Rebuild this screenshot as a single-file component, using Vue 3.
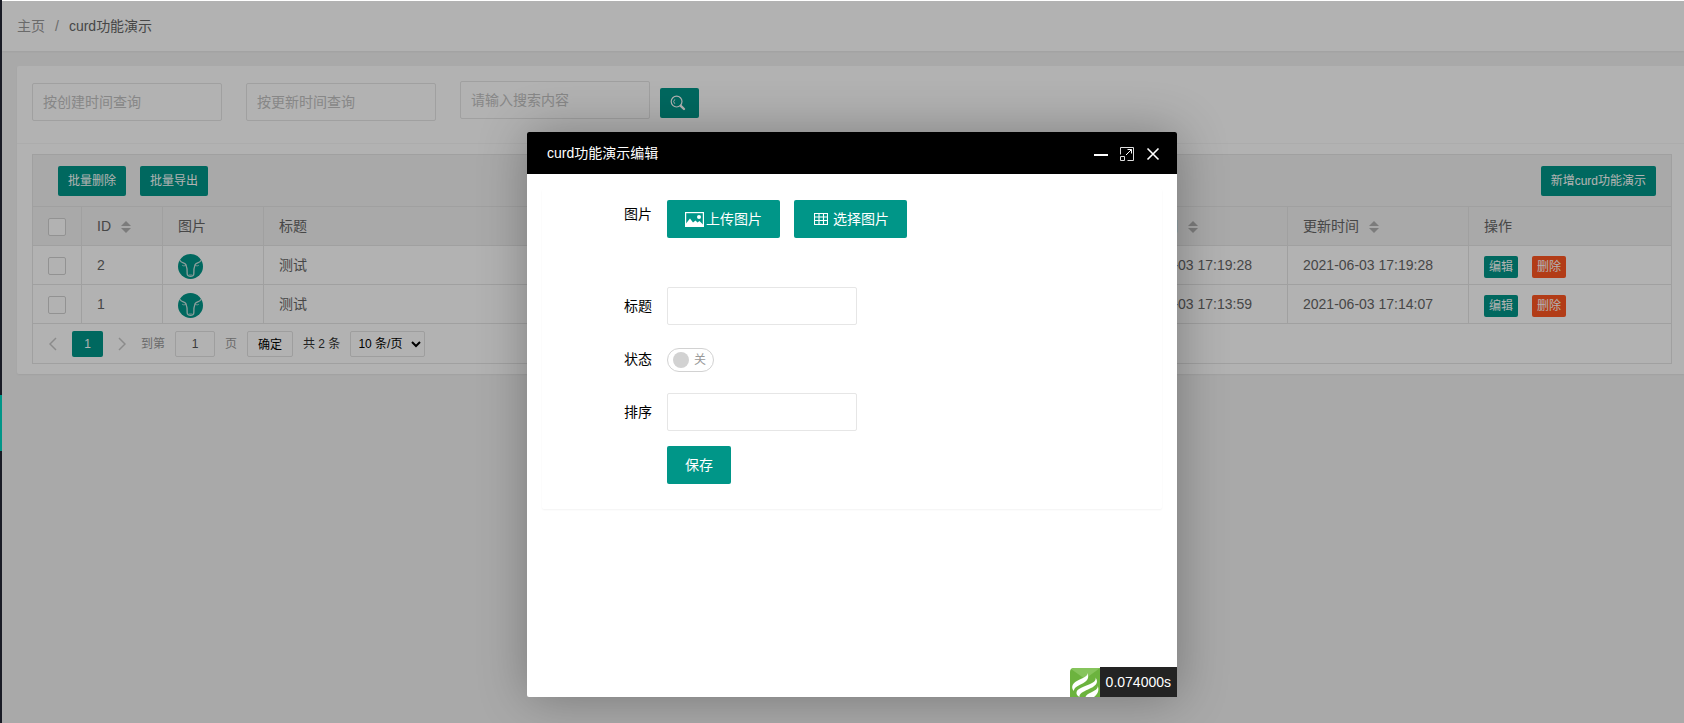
<script setup>
import { ref } from 'vue'

const rows = [
  { id: 2, title: '测试', created: '2021-06-03 17:19:28', updated: '2021-06-03 17:19:28' },
  { id: 1, title: '测试', created: '2021-06-03 17:13:59', updated: '2021-06-03 17:14:07' },
]
const page = ref('1')
const title = ref('')
const sort = ref('')
const enabled = ref(false)
</script>

<template>
  <div class="app">
    <aside class="side"><span class="side-active"></span></aside>
    <div class="main">
      <nav class="crumbs" aria-label="breadcrumb">
        <a href="#">主页</a><span class="slash">/</span><span class="current">curd功能演示</span>
      </nav>

      <section class="card">
        <form class="search" @submit.prevent>
          <input class="field" type="text" placeholder="按创建时间查询" aria-label="按创建时间查询" />
          <input class="field" type="text" placeholder="按更新时间查询" aria-label="按更新时间查询" />
          <div class="search-group">
            <input class="field" type="text" placeholder="请输入搜索内容" aria-label="请输入搜索内容" />
            <button class="btn small search-btn" type="submit" aria-label="搜索">
              <svg width="16" height="16" viewBox="0 0 16 16" fill="none" stroke="currentColor">
                <circle cx="6.6" cy="6.6" r="5.4" stroke-width="1.2" />
                <path d="M4.8 8.8A3 3 0 0 1 4.8 4.4" stroke-width=".9" />
                <path d="M10.8 10.8l3.200 3.200" stroke-width="2.4" stroke-linecap="round" />
              </svg>
            </button>
          </div>
        </form>

        <div class="table-box">
          <div class="toolbar">
            <button class="btn small" type="button">批量删除</button>
            <button class="btn small" type="button">批量导出</button>
            <button class="btn small add" type="button">新增curd功能演示</button>
          </div>
          <table>
            <colgroup>
              <col class="c-check" /><col class="c-id" /><col class="c-pic" /><col />
              <col class="c-time" /><col class="c-time" /><col class="c-act" />
            </colgroup>
            <thead>
              <tr>
                <th><input class="check" type="checkbox" aria-label="全选" /></th>
                <th>ID<span class="sorter"></span></th>
                <th>图片</th>
                <th>标题</th>
                <th>创建时间<span class="sorter"></span></th>
                <th>更新时间<span class="sorter"></span></th>
                <th>操作</th>
              </tr>
            </thead>
            <tbody>
              <tr v-for="row in rows" :key="row.id">
                <td><input class="check" type="checkbox" :aria-label="'选择 ' + row.id" /></td>
                <td>{{ row.id }}</td>
                <td>
                  <svg class="avatar" width="25" height="25" viewBox="0 0 25 25">
                    <circle cx="12.5" cy="12.5" r="12.5" fill="#009688" />
                    <g fill="none" stroke="#c8e2df" stroke-linecap="round">
                      <path d="M2 6.500C3.500 9.500 7 8.500 8 11C9.200 14 9.400 17 9.200 20C9 23.200 16 23.200 15.800 20C15.600 17 15.800 14 17 11C18 8.500 21.500 9.500 23 6.500" stroke-width="1.300" />
                      <path d="M4.500 11.500C5.500 12.200 6.500 12 8 11.200M20.500 11.500C19.500 12.200 18.500 12 17 11.200M11 21h3" stroke-width=".8" />
                    </g>
                  </svg>
                </td>
                <td>{{ row.title }}</td>
                <td>{{ row.created }}</td>
                <td>{{ row.updated }}</td>
                <td>
                  <div class="actions">
                    <button class="btn mini" type="button">编辑</button>
                    <button class="btn mini danger" type="button">删除</button>
                  </div>
                </td>
              </tr>
            </tbody>
          </table>
          <div class="pager">
            <button class="arrow" type="button" aria-label="上一页">
              <svg width="8" height="14" viewBox="0 0 8 14"><path d="M7 1L1 7l6 6" /></svg>
            </button>
            <button class="page-now" type="button">1</button>
            <button class="arrow next" type="button" aria-label="下一页">
              <svg width="8" height="14" viewBox="0 0 8 14"><path d="M1 1l6 6-6 6" /></svg>
            </button>
            <label class="jump">到第<input v-model="page" type="text" />页</label>
            <button class="go" type="button">确定</button>
            <span class="total">共 2 条</span>
            <select aria-label="每页条数"><option>10 条/页</option></select>
          </div>
        </div>
      </section>

      <div class="shade"></div>

      <div class="dialog" role="dialog" aria-label="curd功能演示编辑">
        <header class="dialog-head">
          <span class="dialog-title">curd功能演示编辑</span>
          <button type="button" aria-label="最小化">
            <svg width="14" height="14" viewBox="0 0 14 14"><path d="M0 8h14" stroke="#fff" stroke-width="2" /></svg>
          </button>
          <button type="button" aria-label="最大化">
            <svg width="14" height="14" viewBox="0 0 14 14" fill="none" stroke="#ddd">
              <path d="M.5 7.5V.5h13v13h-6M.5 9.5h4v4h-4z" />
              <path d="M6 8l5.5-5.5M7.5 2.5h4v4" stroke="#fff" />
            </svg>
          </button>
          <button type="button" aria-label="关闭">
            <svg width="14" height="14" viewBox="0 0 14 14"><path d="M1.5 1.5l11 11M12.5 1.5l-11 11" stroke="#fff" stroke-width="1.6" /></svg>
          </button>
        </header>
        <div class="dialog-body">
          <form class="form" @submit.prevent>
            <div class="row pictures">
              <span class="label">图片</span>
              <button class="btn" type="button">
                <svg width="19" height="15" viewBox="0 0 19 15">
                  <rect x=".6" y=".6" width="17.8" height="13.8" fill="none" stroke="#fff" stroke-width="1.2" />
                  <path d="M1 14.5V11.5L5 6.5L8 10.5L10.5 8.5L12.5 10.5L14.5 9L18 12.5V14.5z" fill="#fff" />
                  <circle cx="14" cy="5" r="2" fill="#fff" />
                </svg>
                <span>上传图片</span>
              </button>
              <button class="btn pick" type="button">
                <svg width="14" height="12" viewBox="0 0 14 12" fill="none" stroke="#fff">
                  <path d="M.5.5h13v11H.5zM.5 4h13M.5 7.5h13M5 .5v11M9.5 .5v11" stroke-width="1.1" />
                </svg>
                <span>选择图片</span>
              </button>
            </div>
            <div class="row">
              <label class="label" for="f-title">标题</label>
              <input id="f-title" v-model="title" class="field" type="text" />
            </div>
            <div class="row">
              <label class="label" for="f-state">状态</label>
              <label class="switch">
                <input id="f-state" v-model="enabled" type="checkbox" />
                <span class="knob"></span><span>关</span>
              </label>
            </div>
            <div class="row">
              <label class="label" for="f-sort">排序</label>
              <input id="f-sort" v-model="sort" class="field" type="text" />
            </div>
            <div class="row submit">
              <button class="btn" type="submit">保存</button>
            </div>
          </form>
          <div class="trace">
            <svg width="30" height="29" viewBox="0 0 30 29">
              <path d="M4 0h26v29H0V4a4 4 0 0 1 4-4z" fill="#6cb33e" />
              <path d="M4 0h26L15 11L1 1z" fill="#86c45c" />
              <g fill="#fff">
                <path d="M16.5 4C18 6.5 17 8 13 10C7 12.8 2 15 2.2 19.5C2.3 21 3 22 4 23C3.8 20 7 18.2 11 16.3C17 13.5 20.5 10 16.5 4z" />
                <path d="M25.5 9.5C26.5 12.5 23.5 14.5 19 16.5C12 19.5 6 21 6.5 25.5C6.7 27 8 28.2 9.5 29C9 25.5 13 23.8 18 21.5C25 18.5 29.5 15 25.5 9.5z" />
                <path d="M27.8 18C28 21 25 22.5 21 24.5C18 26 16 27 15.5 29H24C27.5 26.5 29.5 22.5 27.8 18z" />
              </g>
            </svg>
            <span class="time">0.074000s</span>
          </div>
        </div>
      </div>
    </div>
  </div>
</template>

<style>
body {
  margin: 0;
  overflow: hidden;
}
</style>

<style scoped>
* {
  box-sizing: border-box;
}
.app {
  display: flex;
  min-height: 100vh;
  color: #666;
  font: 14px/24px "Liberation Sans", "Noto Sans CJK SC", sans-serif;
}
button,
input,
select {
  margin: 0;
  font-family: inherit;
}
.side {
  flex: 0 0 2px;
  padding-top: 395px;
  background: #191b25;
}
.side-active {
  display: block;
  height: 56px;
  background: #009688;
}
.main {
  position: relative;
  flex: 1;
  min-width: 0;
  border-top: 1px solid #fff;
  background: #f2f2f2;
}
.crumbs {
  display: flex;
  align-items: center;
  height: 50px;
  padding: 0 15px;
  background: #fff;
  box-shadow: 0 1px 2px rgba(0, 0, 0, 0.05);
}
.crumbs a {
  color: #999;
  text-decoration: none;
}
.slash {
  margin: 0 10px;
  color: #999;
}
.card {
  margin: 15px 0 0 15px;
  border-radius: 2px 0 0 2px;
  background: #fff;
  box-shadow: 0 1px 2px rgba(0, 0, 0, 0.05);
}
.search {
  display: flex;
  gap: 24px;
  padding: 15px 15px 22px;
  border-bottom: 1px solid #f6f6f6;
  align-items: flex-end;
}
.search-group {
  display: flex;
  align-items: flex-end;
  gap: 10px;
  padding-bottom: 2px;
}
.field {
  width: 190px;
  height: 38px;
  padding: 0 10px;
  border: 1px solid #e6e6e6;
  border-radius: 2px;
  background: #fff;
  font-size: 14px;
  outline: none;
}
.field::placeholder {
  color: #c2c2c2;
}
.btn {
  display: inline-flex;
  align-items: center;
  justify-content: center;
  height: 38px;
  padding: 0 18px 2px;
  border: 0;
  border-radius: 2px;
  background: #009688;
  color: #fff;
  font-size: 14px;
  white-space: nowrap;
}
.btn.small {
  height: 30px;
  padding: 0 10px 3px;
  font-size: 12px;
}
.btn.search-btn {
  width: 39px;
  margin-bottom: 1px;
  padding: 0 13px 0 10px;
}
.btn.mini {
  height: 22px;
  padding: 0 5px 2px;
  font-size: 12px;
}
.btn.danger {
  background: #ff5722;
}
.table-box {
  margin: 10px 12px 0 15px;
  border: 1px solid #e6e6e6;
}
.card::after {
  display: block;
  height: 10px;
  content: "";
}
.toolbar {
  display: flex;
  gap: 14px;
  padding: 11px 15px 10px 25px;
  background: #f2f2f2;
}
.toolbar .add {
  margin-left: auto;
}
table {
  width: 100%;
  table-layout: fixed;
  border-spacing: 0;
  border-bottom: 1px solid #e6e6e6;
}
.c-check { width: 49px; }
.c-id { width: 81px; }
.c-pic { width: 101px; }
.c-time { width: 181px; }
.c-act { width: 202px; }
th,
td {
  height: 39px;
  padding: 0 15px;
  border-top: 1px solid #e6e6e6;
  border-right: 1px solid #e6e6e6;
  font-weight: 400;
  text-align: left;
  white-space: nowrap;
}
th:last-child,
td:last-child {
  border-right: 0;
}
th {
  background: #f2f2f2;
}
.check {
  display: block;
  width: 18px;
  height: 18px;
  margin-top: 2px;
  border: 1px solid #d2d2d2;
  border-radius: 2px;
  background: #fff;
  appearance: none;
}
.sorter {
  display: inline-flex;
  flex-direction: column;
  gap: 2px;
  margin-left: 10px;
  vertical-align: middle;
}
.sorter::before,
.sorter::after {
  border: 5px solid transparent;
  content: "";
}
.sorter::before {
  border-top: 0;
  border-bottom-color: #b2b2b2;
}
.sorter::after {
  border-bottom: 0;
  border-top-color: #b2b2b2;
}
.avatar {
  display: block;
  margin-top: 2px;
}
.actions {
  display: flex;
  gap: 14px;
  padding-top: 3px;
}
.pager {
  display: flex;
  align-items: center;
  height: 39px;
  padding: 0 16px;
  font-size: 12px;
}
.arrow {
  display: flex;
  padding: 0;
  border: 0;
  background: none;
}
.arrow path {
  fill: none;
  stroke: #c8c8c8;
  stroke-width: 1.5;
}
.page-now {
  width: 31px;
  height: 26px;
  margin: 0 15px;
  padding: 0;
  border: 0;
  border-radius: 2px;
  background: #009688;
  color: #fff;
  font-size: 12px;
}
.jump {
  display: flex;
  align-items: center;
  gap: 10px;
  margin-left: 15px;
  color: #999;
}
.jump input {
  width: 40px;
  height: 26px;
  padding: 0;
  border: 1px solid #e2e2e2;
  border-radius: 2px;
  background: #fff;
  color: #555;
  font-size: 12px;
  text-align: center;
}
.go {
  width: 46px;
  height: 26px;
  margin: 0 10px;
  padding: 0;
  border: 1px solid #e2e2e2;
  border-radius: 2px;
  background: #fff;
  color: #000;
  font-size: 12px;
}
.total {
  color: #333;
}
.pager select {
  width: 75px;
  height: 26px;
  margin-left: 10px;
  padding: 0 3px;
  border: 1px solid #e2e2e2;
  border-radius: 2px;
  background: #fff;
  color: #000;
  font-size: 12px;
}
.shade {
  position: absolute;
  inset: 0;
  background: rgba(0, 0, 0, 0.3);
}
.dialog {
  position: absolute;
  top: 131px;
  left: calc(50% - 316px);
  width: 650px;
  border-radius: 2px;
  background: #fff;
  box-shadow: 1px 1px 50px rgba(0, 0, 0, 0.3);
  color: #000;
}
.dialog-head {
  display: flex;
  align-items: center;
  gap: 12px;
  height: 42px;
  padding: 0 17px 0 20px;
  border-radius: 2px 2px 0 0;
  background: #000;
  color: #fff;
}
.dialog-title {
  flex: 1;
}
.dialog-head button {
  display: flex;
  padding: 2px 0 0;
  border: 0;
  background: none;
}
.dialog-body {
  display: flex;
  flex-direction: column;
  min-height: 523px;
  padding: 15px 0 0;
}
.form {
  display: flex;
  flex-direction: column;
  gap: 15px;
  margin: 0 15px;
  padding: 11px 0 25px;
  border-radius: 2px;
  box-shadow: 0 1px 2px rgba(0, 0, 0, 0.05);
}
.row {
  display: flex;
  align-items: center;
  min-height: 38px;
}
.label {
  width: 110px;
  margin-right: 15px;
  text-align: right;
}
.pictures {
  align-items: flex-start;
  margin-bottom: 34px;
}
.pictures .label {
  padding-top: 2px;
}
.pictures .btn + .btn {
  margin-left: 14px;
}
.pictures .btn {
  gap: 2px;
  width: 113px;
  padding: 0;
}
.pictures .btn span {
  padding-bottom: 2px;
}
.pictures .pick {
  gap: 5px;
  padding-left: 2px;
}
.submit {
  padding-left: 125px;
}
.switch {
  display: flex;
  align-items: center;
  gap: 5px;
  width: 47px;
  height: 24px;
  margin-top: 2px;
  padding-left: 5px;
  border: 1px solid #d2d2d2;
  border-radius: 20px;
  color: #999;
  font-size: 12px;
}
.switch input {
  position: absolute;
  opacity: 0;
}
.knob {
  width: 16px;
  height: 16px;
  border-radius: 50%;
  background: #d2d2d2;
}
.trace {
  display: flex;
  align-items: flex-end;
  justify-content: flex-end;
  margin-top: auto;
}
.time {
  padding: 0 6px;
  background: #232323;
  color: #fff;
  line-height: 30px;
}
</style>
